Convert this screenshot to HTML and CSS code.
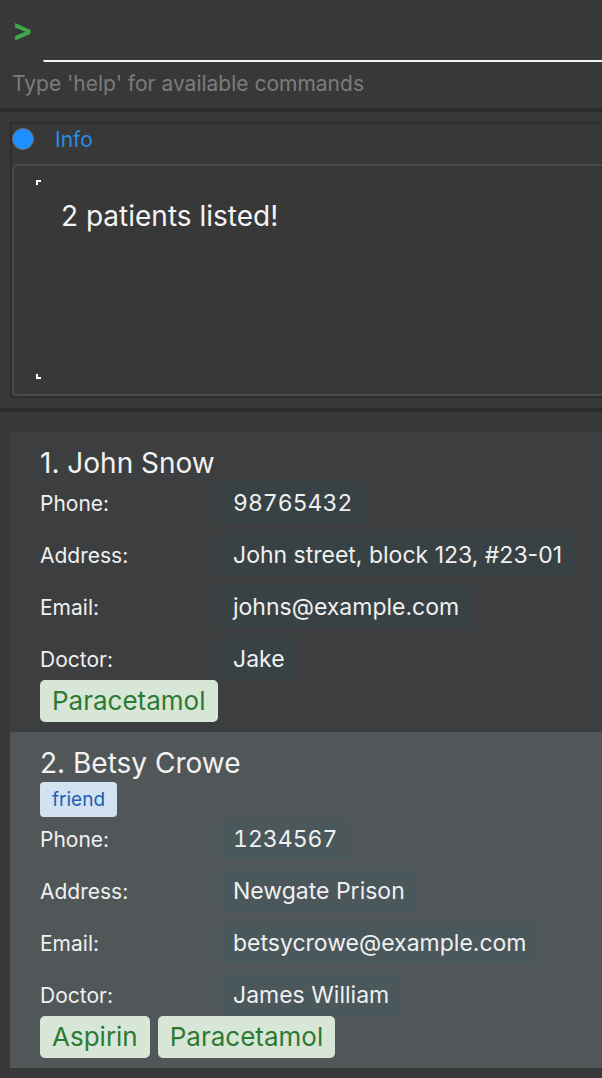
FILE: index.html
```html
<!DOCTYPE html>
<html>
<head>
<meta charset="utf-8">
<link rel="stylesheet" href="styles.css">
</head>
<body>
<div class="app">
  <section class="command">
    <div class="command-row">
      <span class="prompt">&gt;</span>
      <div class="command-input"></div>
    </div>
    <div class="hint">Type 'help' for available commands</div>
  </section>
  <div class="divider"></div>
  <section class="result">
    <div class="result-box">
      <div class="result-head">
        <span class="radio"></span>
        <span class="result-title">Info</span>
      </div>
      <div class="result-text">
        <span class="mark mark-top"></span>
        <p class="message">2 patients listed!</p>
        <span class="mark mark-bottom"></span>
      </div>
    </div>
  </section>
  <div class="divider"></div>
  <section class="list">
    <article class="card card-even">
      <h2 class="name">1. John Snow</h2>
      <div class="fields">
        <div class="field"><span class="label">Phone:</span><span class="value value-phone">98765432</span></div>
        <div class="field"><span class="label">Address:</span><span class="value">John street, block 123, #23-01</span></div>
        <div class="field"><span class="label">Email:</span><span class="value">johns@example.com</span></div>
        <div class="field"><span class="label">Doctor:</span><span class="value">Jake</span></div>
      </div>
      <div class="meds">
        <span class="med">Paracetamol</span>
      </div>
    </article>
    <article class="card card-odd">
      <h2 class="name">2. Betsy Crowe</h2>
      <div class="tags"><span class="tag">friend</span></div>
      <div class="fields">
        <div class="field"><span class="label">Phone:</span><span class="value value-phone">1234567</span></div>
        <div class="field"><span class="label">Address:</span><span class="value">Newgate Prison</span></div>
        <div class="field"><span class="label">Email:</span><span class="value">betsycrowe@example.com</span></div>
        <div class="field"><span class="label">Doctor:</span><span class="value">James William</span></div>
      </div>
      <div class="meds">
        <span class="med">Aspirin</span>
        <span class="med">Paracetamol</span>
      </div>
    </article>
  </section>
</div>
</body>
</html>
```
FILE: styles.css
```css
* { box-sizing: border-box; }
html, body {
  margin: 0;
  padding: 0;
  background: #383838;
  font-family: Inter, "Noto Sans", sans-serif;
  color: #f2f2f2;
}
.app {
  width: 602px;
  height: 1078px;
  overflow: hidden;
}
.command {
  height: 108px;
  padding: 12px 0 0 12px;
}
.command-row {
  display: flex;
  align-items: flex-start;
  height: 50px;
}
.prompt {
  color: #3fa74a;
  font-weight: 700;
  font-size: 31px;
  line-height: 36px;
  width: 31px;
}
.command-input {
  flex: 1;
  height: 50px;
  border-bottom: 2px solid #f4f4f4;
  border-bottom-left-radius: 2px;
}
.hint {
  color: #7c7c7c;
  font-size: 21px;
  line-height: 24px;
  margin-top: 10px;
}
.divider {
  height: 4px;
  background: #2b2b2b;
}
.result {
  height: 296px;
  padding: 10px 0 0 10px;
}
.result-box {
  width: 620px;
  height: 276px;
  border: 2px solid #2e2e2e;
  display: flex;
  flex-direction: column;
}
.result-head {
  display: flex;
  align-items: center;
  height: 40px;
  padding-bottom: 10px;
}
.radio {
  width: 22px;
  height: 22px;
  border-radius: 50%;
  background: #1e8fff;
  border: 1.5px solid #6e6e6e;
  margin-right: 21px;
}
.result-title {
  color: #2a8ce4;
  font-size: 21px;
}
.result-text {
  position: relative;
  flex: 1;
  border: 2px solid #4b4b4b;
  border-radius: 5px;
  padding: 33px 0 0 47px;
}
.message {
  margin: 0;
  font-size: 28px;
  line-height: 34px;
  color: #f4f4f4;
}
.mark {
  position: absolute;
  left: 22px;
  width: 5px;
  height: 5px;
  border-color: #ffffff;
  border-style: solid;
  border-width: 0;
}
.mark-top { top: 14px; border-top-width: 2px; border-left-width: 2px; }
.mark-bottom { bottom: 15px; border-bottom-width: 2px; border-left-width: 2px; }
.list {
  padding: 20px 0 0 10px;
}
.card {
  padding: 16px 0 10px 30px;
}
.card-even { background: #3c3e3f; }
.card-odd { background: #515658; }
.name {
  margin: 0 0 4px;
  font-weight: 400;
  font-size: 28px;
  line-height: 30px;
  color: #f2f2f2;
}
.tags {
  display: flex;
  margin-bottom: 1px;
}
.tag {
  background: #d3e2f0;
  color: #1b5fb4;
  font-size: 19px;
  line-height: 35px;
  padding: 0 12px;
  border-radius: 4px;
}
.fields {
  display: flex;
  flex-direction: column;
  gap: 10px;
}
.field {
  display: flex;
  align-items: center;
}
.label {
  width: 180px;
  font-size: 21px;
  color: #f0f0f0;
}
.value {
  height: 42px;
  line-height: 42px;
  padding: 0 13px;
  border-radius: 4px;
  font-size: 23px;
  color: #f0f0f0;
}
.value-phone { font-variant-numeric: tabular-nums; }
.card-even .value { background: #384245; }
.card-odd .value { background: #4a575b; }
.meds {
  display: flex;
  gap: 8px;
}
.med {
  background: #d8e6d8;
  color: #2c7a32;
  font-size: 26px;
  line-height: 42px;
  padding: 0 12px;
  border-radius: 5px;
}
```
